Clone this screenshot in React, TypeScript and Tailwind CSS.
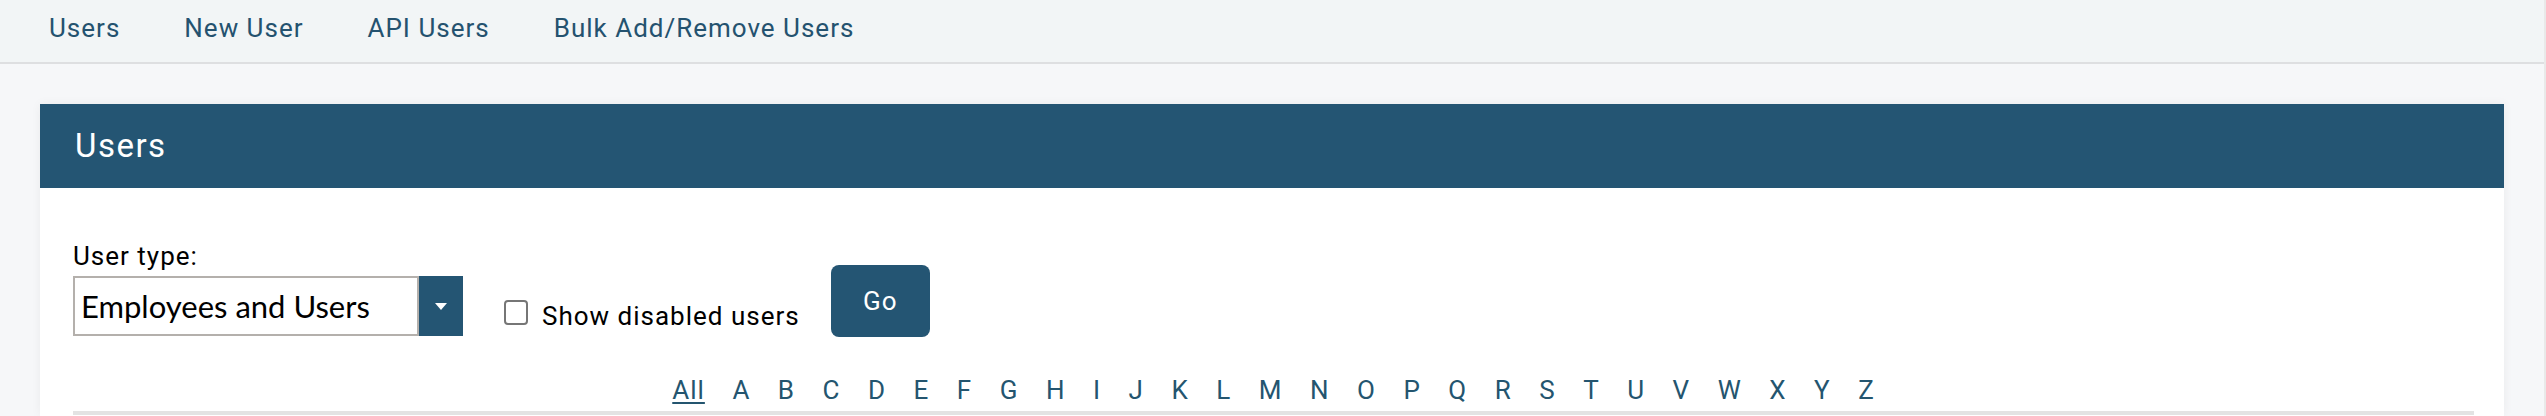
const letters = "ABCDEFGHIJKLMNOPQRSTUVWXYZ".split("");

const navLinks = ["Users", "New User", "API Users", "Bulk Add/Remove Users"];

export default function App() {
    return (
        <div className="flex min-h-[416px] w-full bg-[#f6f7f9] font-['Roboto',sans-serif] tracking-[1px]">
            <div className="min-w-0 flex-1">
                <nav className="h-[64px] border-b-2 border-[#dedfe1] bg-[#f2f5f6] pl-[49px] pt-[15px]">
                    <ul className="flex gap-[64px] text-[26px] leading-[26px] text-[#24526f]">
                        {navLinks.map((l) => (
                            <li key={l}>
                                <a href="#">{l}</a>
                            </li>
                        ))}
                    </ul>
                </nav>

                <main className="px-[40px] pt-[40px]">
                    <section className="shadow-[0_0_10px_rgba(0,0,0,0.05)]">
                        <header className="h-[84px] bg-[#245573] pl-[35px] pt-[25px] text-[33px] leading-[33px] tracking-[1.5px] text-white">
                            Users
                        </header>

                        <div className="bg-white pl-[33px] pr-[30px] pt-[55px]">
                            <form className="flex items-start">
                                <div>
                                    <label className="block text-[26px] leading-[26px] text-black">User type:</label>
                                    <div className="mt-[7px] flex h-[60px] w-[390px]">
                                        <div className="flex flex-1 items-center border-2 border-[#b4b0ac] pl-[6px] font-['Lato',sans-serif] text-[31px] leading-[31px] tracking-normal text-black">
                                            Employees and Users
                                        </div>
                                        <div className="flex w-[44px] items-center justify-center bg-[#245573]">
                                            <svg width="12" height="7" viewBox="0 0 12 7">
                                                <path d="M0 0h12L6 7z" fill="#fff" />
                                            </svg>
                                        </div>
                                    </div>
                                </div>

                                <div className="ml-[41px] mt-[57px] flex items-start">
                                    <span className="block h-[25px] w-[24px] rounded-[4px] border-2 border-[#767676] bg-white" />
                                    <span className="ml-[14px] mt-[3px] text-[26px] leading-[26px] text-black">Show disabled users</span>
                                </div>

                                <button
                                    type="button"
                                    className="ml-[31px] mt-[22px] h-[72px] w-[99px] rounded-[8px] bg-[#245573] text-[26px] leading-[26px] text-white"
                                >
                                    Go
                                </button>
                            </form>

                            <div className="mt-[40px] flex justify-center text-[26px] leading-[26px] text-[#24556f]">
                                <a href="#" className="px-[13.75px] underline decoration-2 underline-offset-[3px]">
                                    All
                                </a>
                                {letters.map((c) => (
                                    <a key={c} href="#" className="px-[13.75px]">
                                        {c}
                                    </a>
                                ))}
                            </div>

                            <div className="mt-[8px] h-[5px] border-t-4 border-[#e3e3e3]" />
                        </div>
                    </section>
                </main>
            </div>
            <div className="w-[2px] bg-[#e9e9e9]" />
        </div>
    );
}
